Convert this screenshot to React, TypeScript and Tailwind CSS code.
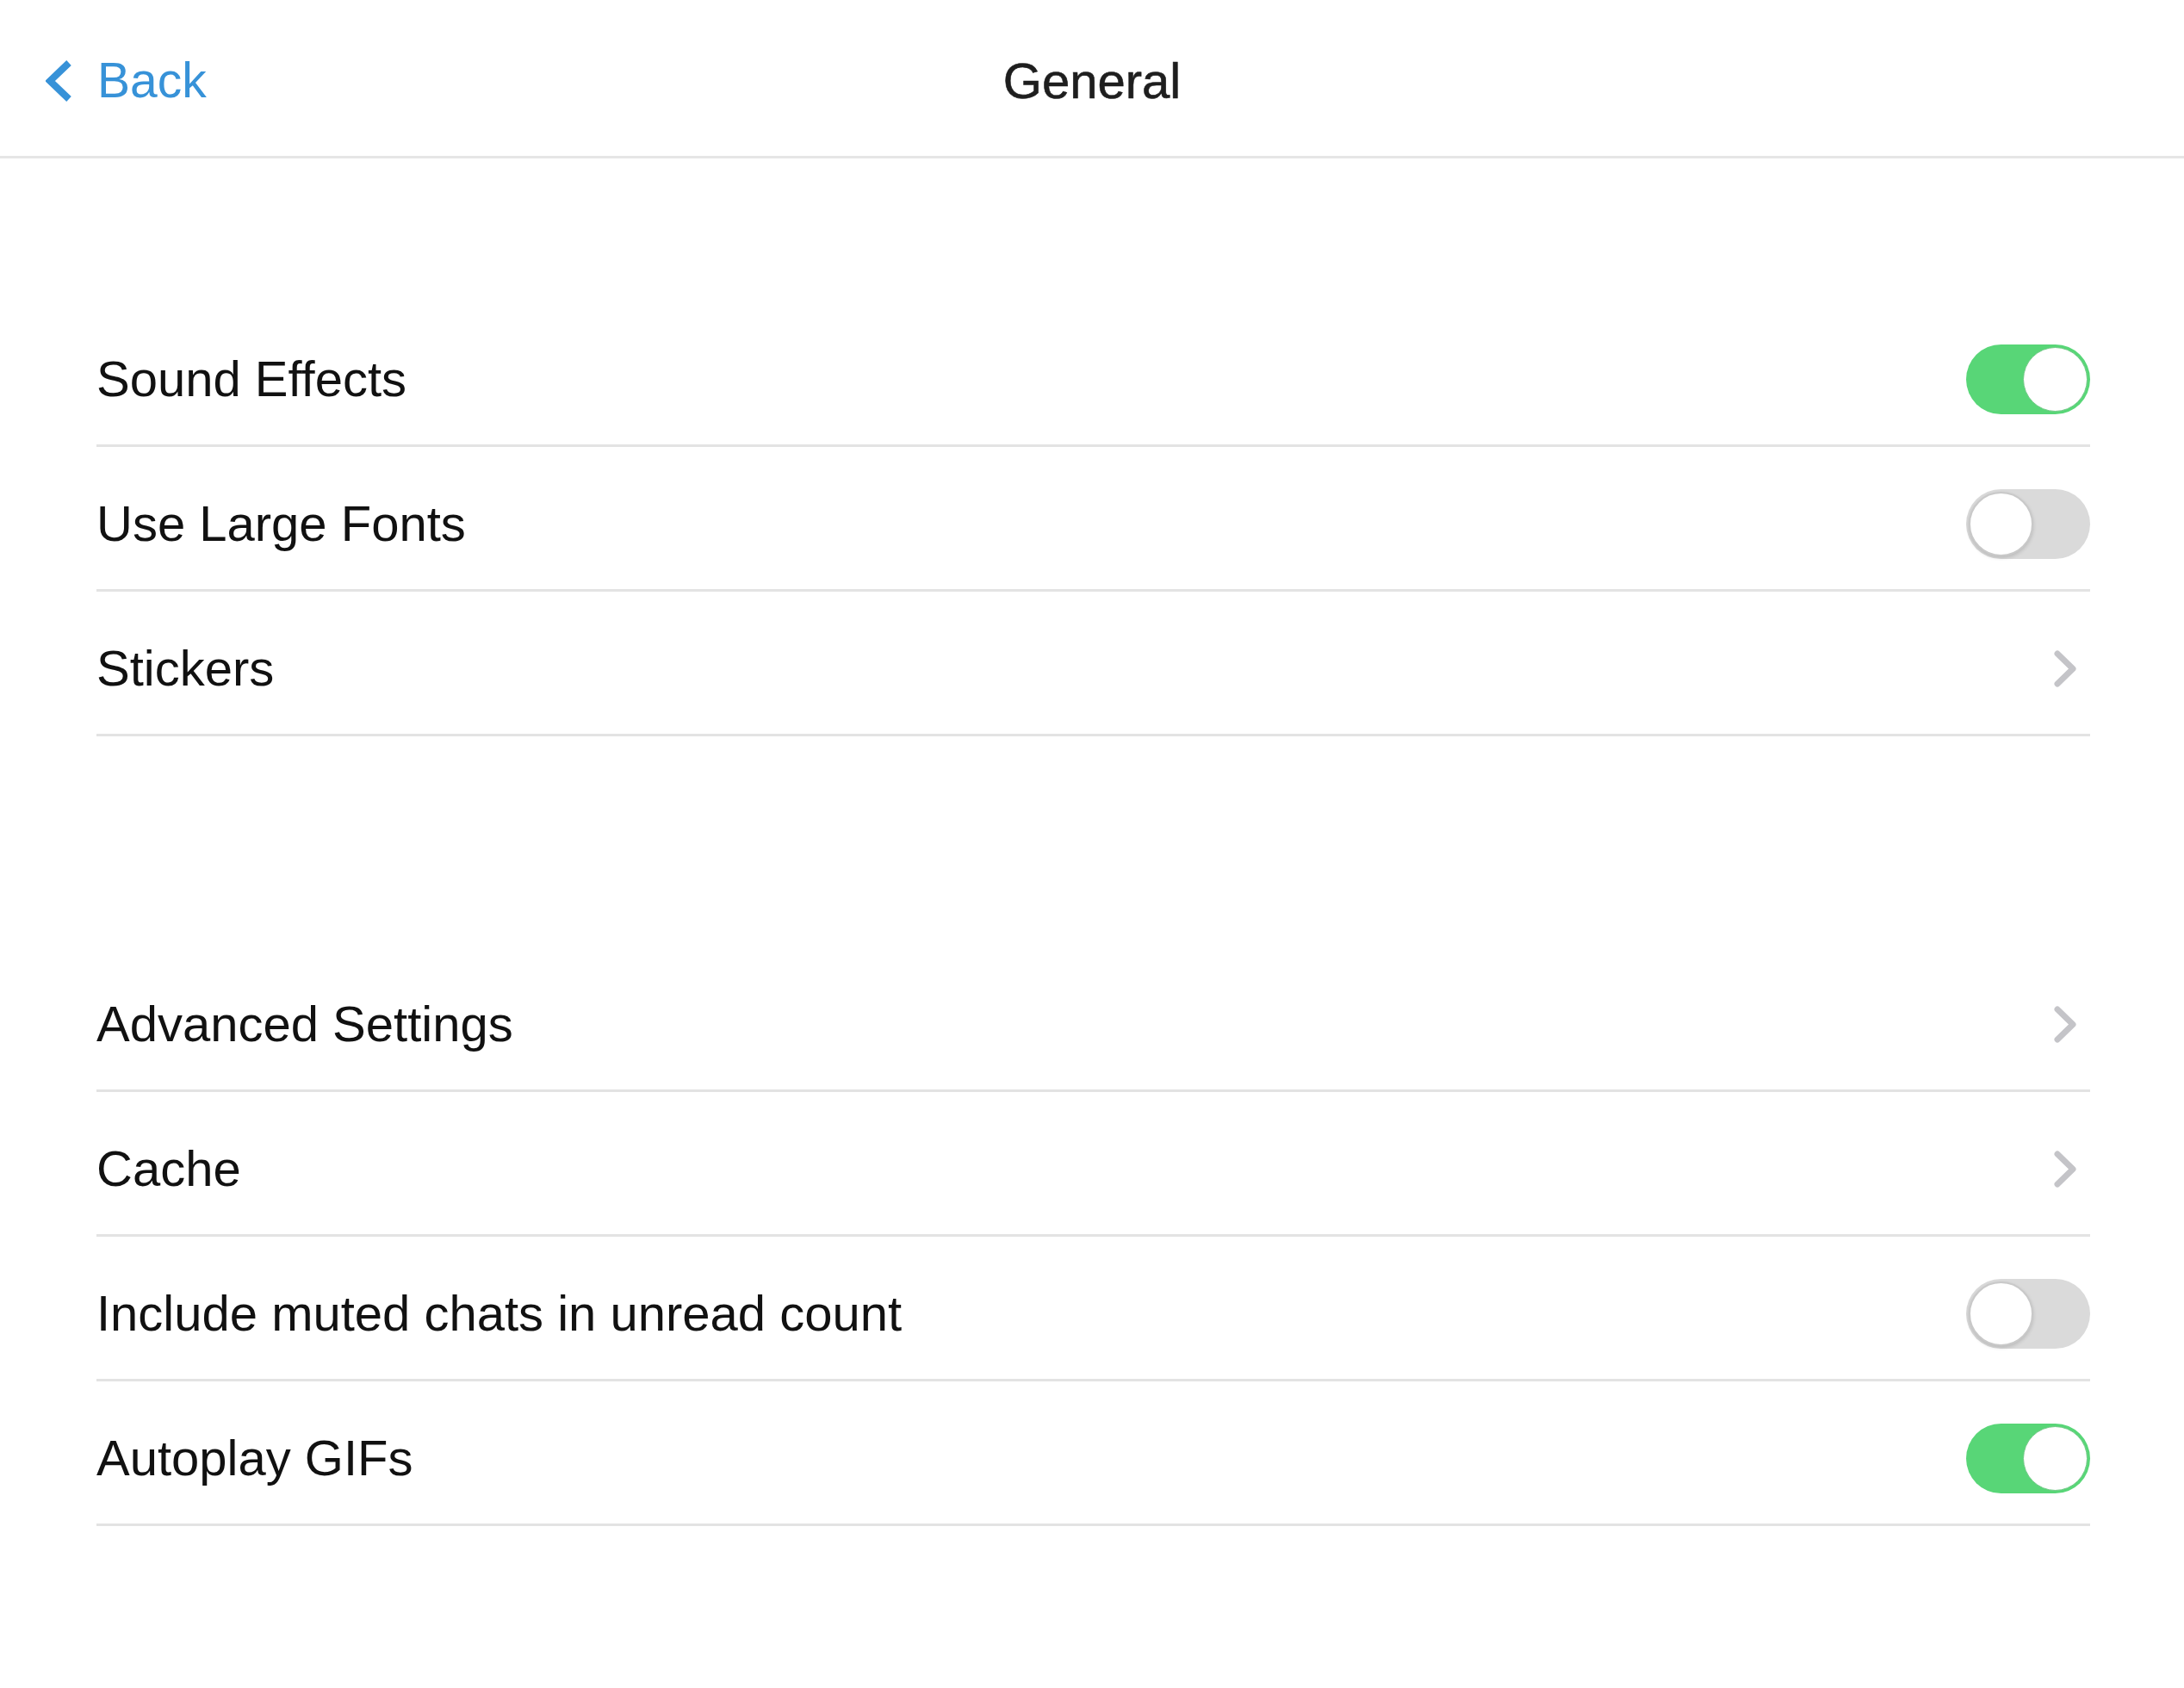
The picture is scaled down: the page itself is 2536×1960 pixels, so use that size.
import React from 'react';

type Row = { label: string; kind: 'toggle' | 'link'; on?: boolean };

const sectionOne: Row[] = [
  { label: 'Sound Effects', kind: 'toggle', on: true },
  { label: 'Use Large Fonts', kind: 'toggle', on: false },
  { label: 'Stickers', kind: 'link' },
];

const sectionTwo: Row[] = [
  { label: 'Advanced Settings', kind: 'link' },
  { label: 'Cache', kind: 'link' },
  { label: 'Include muted chats in unread count', kind: 'toggle', on: false },
  { label: 'Autoplay GIFs', kind: 'toggle', on: true },
];

const Toggle: React.FC<{ on: boolean }> = ({ on }) => (
  <div
    className={`flex h-[81px] w-[144px] items-center rounded-full p-[3px] ${
      on ? 'justify-end bg-[#58d677]' : 'justify-start bg-[#dadada]'
    }`}
  >
    <div
      className={`h-[75px] w-[75px] rounded-full bg-white ${
        on ? 'border border-[#72c987]' : 'border-[2px] border-[#c9c9c9] shadow-[0_2px_4px_rgba(0,0,0,0.15)]'
      }`}
    ></div>
  </div>
);

const Chevron: React.FC = () => (
  <svg width="27" height="43" viewBox="0 0 27 43" className="mr-[15px]">
    <polyline
      points="4,4 22,21.5 4,39"
      fill="none"
      stroke="#c4c4c8"
      strokeWidth="7"
      strokeLinecap="round"
      strokeLinejoin="round"
    />
  </svg>
);

const SettingsRow: React.FC<{ row: Row }> = ({ row }) => (
  <div className="flex h-[168px] items-center justify-between border-b-[3px] border-[#e3e3e3] pt-[13px]">
    <span className="text-[58px] leading-none text-[#111]">{row.label}</span>
    {row.kind === 'toggle' ? <Toggle on={!!row.on} /> : <Chevron />}
  </div>
);

const App: React.FC = () => {
  return (
    <div className="min-h-[1960px] w-full bg-white font-['Liberation_Sans',Arial,sans-serif]">
      {/* Header */}
      <header className="grid h-[184px] grid-cols-[1fr_auto_1fr] items-center border-b-[3px] border-[#e6e6e6] pt-[6px]">
        <div className="flex items-center pl-[53px]">
          <svg width="31" height="48" viewBox="0 0 31 48">
            <polyline
              points="27,3 5,24 27,45"
              fill="none"
              stroke="#3792d8"
              strokeWidth="8"
              strokeLinejoin="miter"
            />
          </svg>
          <span className="ml-[29px] text-[57px] leading-none text-[#3792d8]">Back</span>
        </div>
        <h1 className="text-[58px] leading-none font-normal text-[#1e1e1e] [-webkit-text-stroke:0.6px_#1e1e1e]">
          General
        </h1>
        <div></div>
      </header>

      {/* Settings list */}
      <main className="pl-[112px] pr-[109px] pt-[167px]">
        <div>
          {sectionOne.map((row) => (
            <SettingsRow key={row.label} row={row} />
          ))}
        </div>
        <div className="mt-[245px]">
          {sectionTwo.map((row) => (
            <SettingsRow key={row.label} row={row} />
          ))}
        </div>
      </main>
    </div>
  );
};

export default App;
